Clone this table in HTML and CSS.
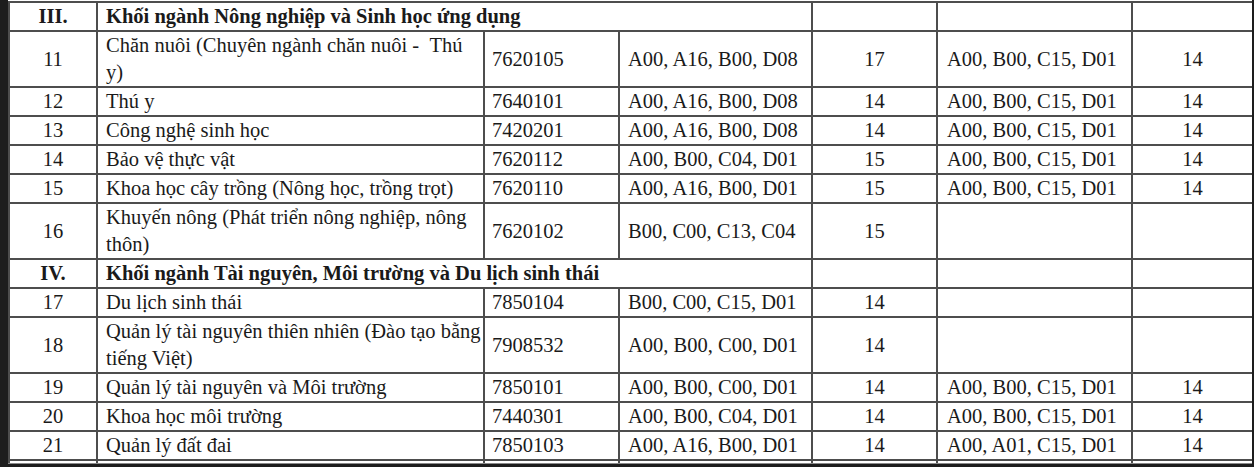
FILE: index.html
```html
<!DOCTYPE html>
<html lang="vi">
<head>
<meta charset="utf-8">
<title>Bảng ngành</title>
<link rel="stylesheet" href="styles.css">
</head>
<body>
<div class="frame">
<table class="majors">
<colgroup>
<col class="c-stt"><col class="c-name"><col class="c-code"><col class="c-combo"><col class="c-score"><col class="c-combo2"><col class="c-score2">
</colgroup>
<tbody>
<tr class="group"><td class="stt">III.</td><td colspan="3" class="gname">Khối ngành Nông nghiệp và Sinh học ứng dụng</td><td></td><td></td><td></td></tr>
<tr><td class="stt">11</td><td class="name">Chăn nuôi (Chuyên ngành chăn nuôi - &nbsp;Thú<br>y)</td><td class="code">7620105</td><td class="combo">A00, A16, B00, D08</td><td class="score">17</td><td class="combo2">A00, B00, C15, D01</td><td class="score">14</td></tr>
<tr><td class="stt">12</td><td class="name">Thú y</td><td class="code">7640101</td><td class="combo">A00, A16, B00, D08</td><td class="score">14</td><td class="combo2">A00, B00, C15, D01</td><td class="score">14</td></tr>
<tr><td class="stt">13</td><td class="name">Công nghệ sinh học</td><td class="code">7420201</td><td class="combo">A00, A16, B00, D08</td><td class="score">14</td><td class="combo2">A00, B00, C15, D01</td><td class="score">14</td></tr>
<tr><td class="stt">14</td><td class="name">Bảo vệ thực vật</td><td class="code">7620112</td><td class="combo">A00, B00, C04, D01</td><td class="score">15</td><td class="combo2">A00, B00, C15, D01</td><td class="score">14</td></tr>
<tr><td class="stt">15</td><td class="name">Khoa học cây trồng (Nông học, trồng trọt)</td><td class="code">7620110</td><td class="combo">A00, A16, B00, D01</td><td class="score">15</td><td class="combo2">A00, B00, C15, D01</td><td class="score">14</td></tr>
<tr><td class="stt">16</td><td class="name">Khuyến nông (Phát triển nông nghiệp, nông<br>thôn)</td><td class="code">7620102</td><td class="combo">B00, C00, C13, C04</td><td class="score">15</td><td></td><td></td></tr>
<tr class="group"><td class="stt">IV.</td><td colspan="3" class="gname">Khối ngành Tài nguyên, Môi trường và Du lịch sinh thái</td><td></td><td></td><td></td></tr>
<tr><td class="stt">17</td><td class="name">Du lịch sinh thái</td><td class="code">7850104</td><td class="combo">B00, C00, C15, D01</td><td class="score">14</td><td></td><td></td></tr>
<tr><td class="stt">18</td><td class="name">Quản lý tài nguyên thiên nhiên (Đào tạo bằng<br>tiếng Việt)</td><td class="code">7908532</td><td class="combo">A00, B00, C00, D01</td><td class="score">14</td><td></td><td></td></tr>
<tr><td class="stt">19</td><td class="name">Quản lý tài nguyên và Môi trường</td><td class="code">7850101</td><td class="combo">A00, B00, C00, D01</td><td class="score">14</td><td class="combo2">A00, B00, C15, D01</td><td class="score">14</td></tr>
<tr><td class="stt">20</td><td class="name">Khoa học môi trường</td><td class="code">7440301</td><td class="combo">A00, B00, C04, D01</td><td class="score">14</td><td class="combo2">A00, B00, C15, D01</td><td class="score">14</td></tr>
<tr><td class="stt">21</td><td class="name">Quản lý đất đai</td><td class="code">7850103</td><td class="combo">A00, A16, B00, D01</td><td class="score">14</td><td class="combo2">A00, A01, C15, D01</td><td class="score">14</td></tr>
<tr class="cut"><td class="stt">&nbsp;</td><td class="name">&nbsp;</td><td></td><td></td><td></td><td></td><td></td></tr>
</tbody>
</table>
</div>
</body>
</html>
```
FILE: styles.css
```css
html, body {
  margin: 0;
  padding: 0;
}
body {
  width: 1254px;
  height: 467px;
  overflow: hidden;
  background: #1d1d1d;
}
.frame {
  margin-left: 8px;
  width: 1244px;
  height: 462px;
  padding-top: 1px;
  overflow: hidden;
  background: #fff;
  border-bottom: 1px solid #8a8a8a;
}
.majors {
  border-collapse: collapse;
  table-layout: fixed;
  width: 1244px;
  font-family: "Liberation Serif", "Times New Roman", serif;
  font-size: 20.5px;
  line-height: 27px;
  color: #1a1a1a;
}
.c-stt { width: 88px; }
.c-name { width: 387px; }
.c-code { width: 135px; }
.c-combo { width: 193px; }
.c-score { width: 125px; }
.c-combo2 { width: 195px; }
.c-score2 { width: 121px; }
.majors td {
  border: 2px solid #4d4d4d;
  padding: 0 8px;
  vertical-align: middle;
  white-space: nowrap;
}
.majors .stt, .majors .score {
  text-align: center;
}
.majors .code {
  padding-left: 7px;
}
.majors .combo {
  padding-left: 8px;
}
.majors .combo2 {
  padding-left: 9px;
}
.group td {
  font-weight: bold;
}
```
